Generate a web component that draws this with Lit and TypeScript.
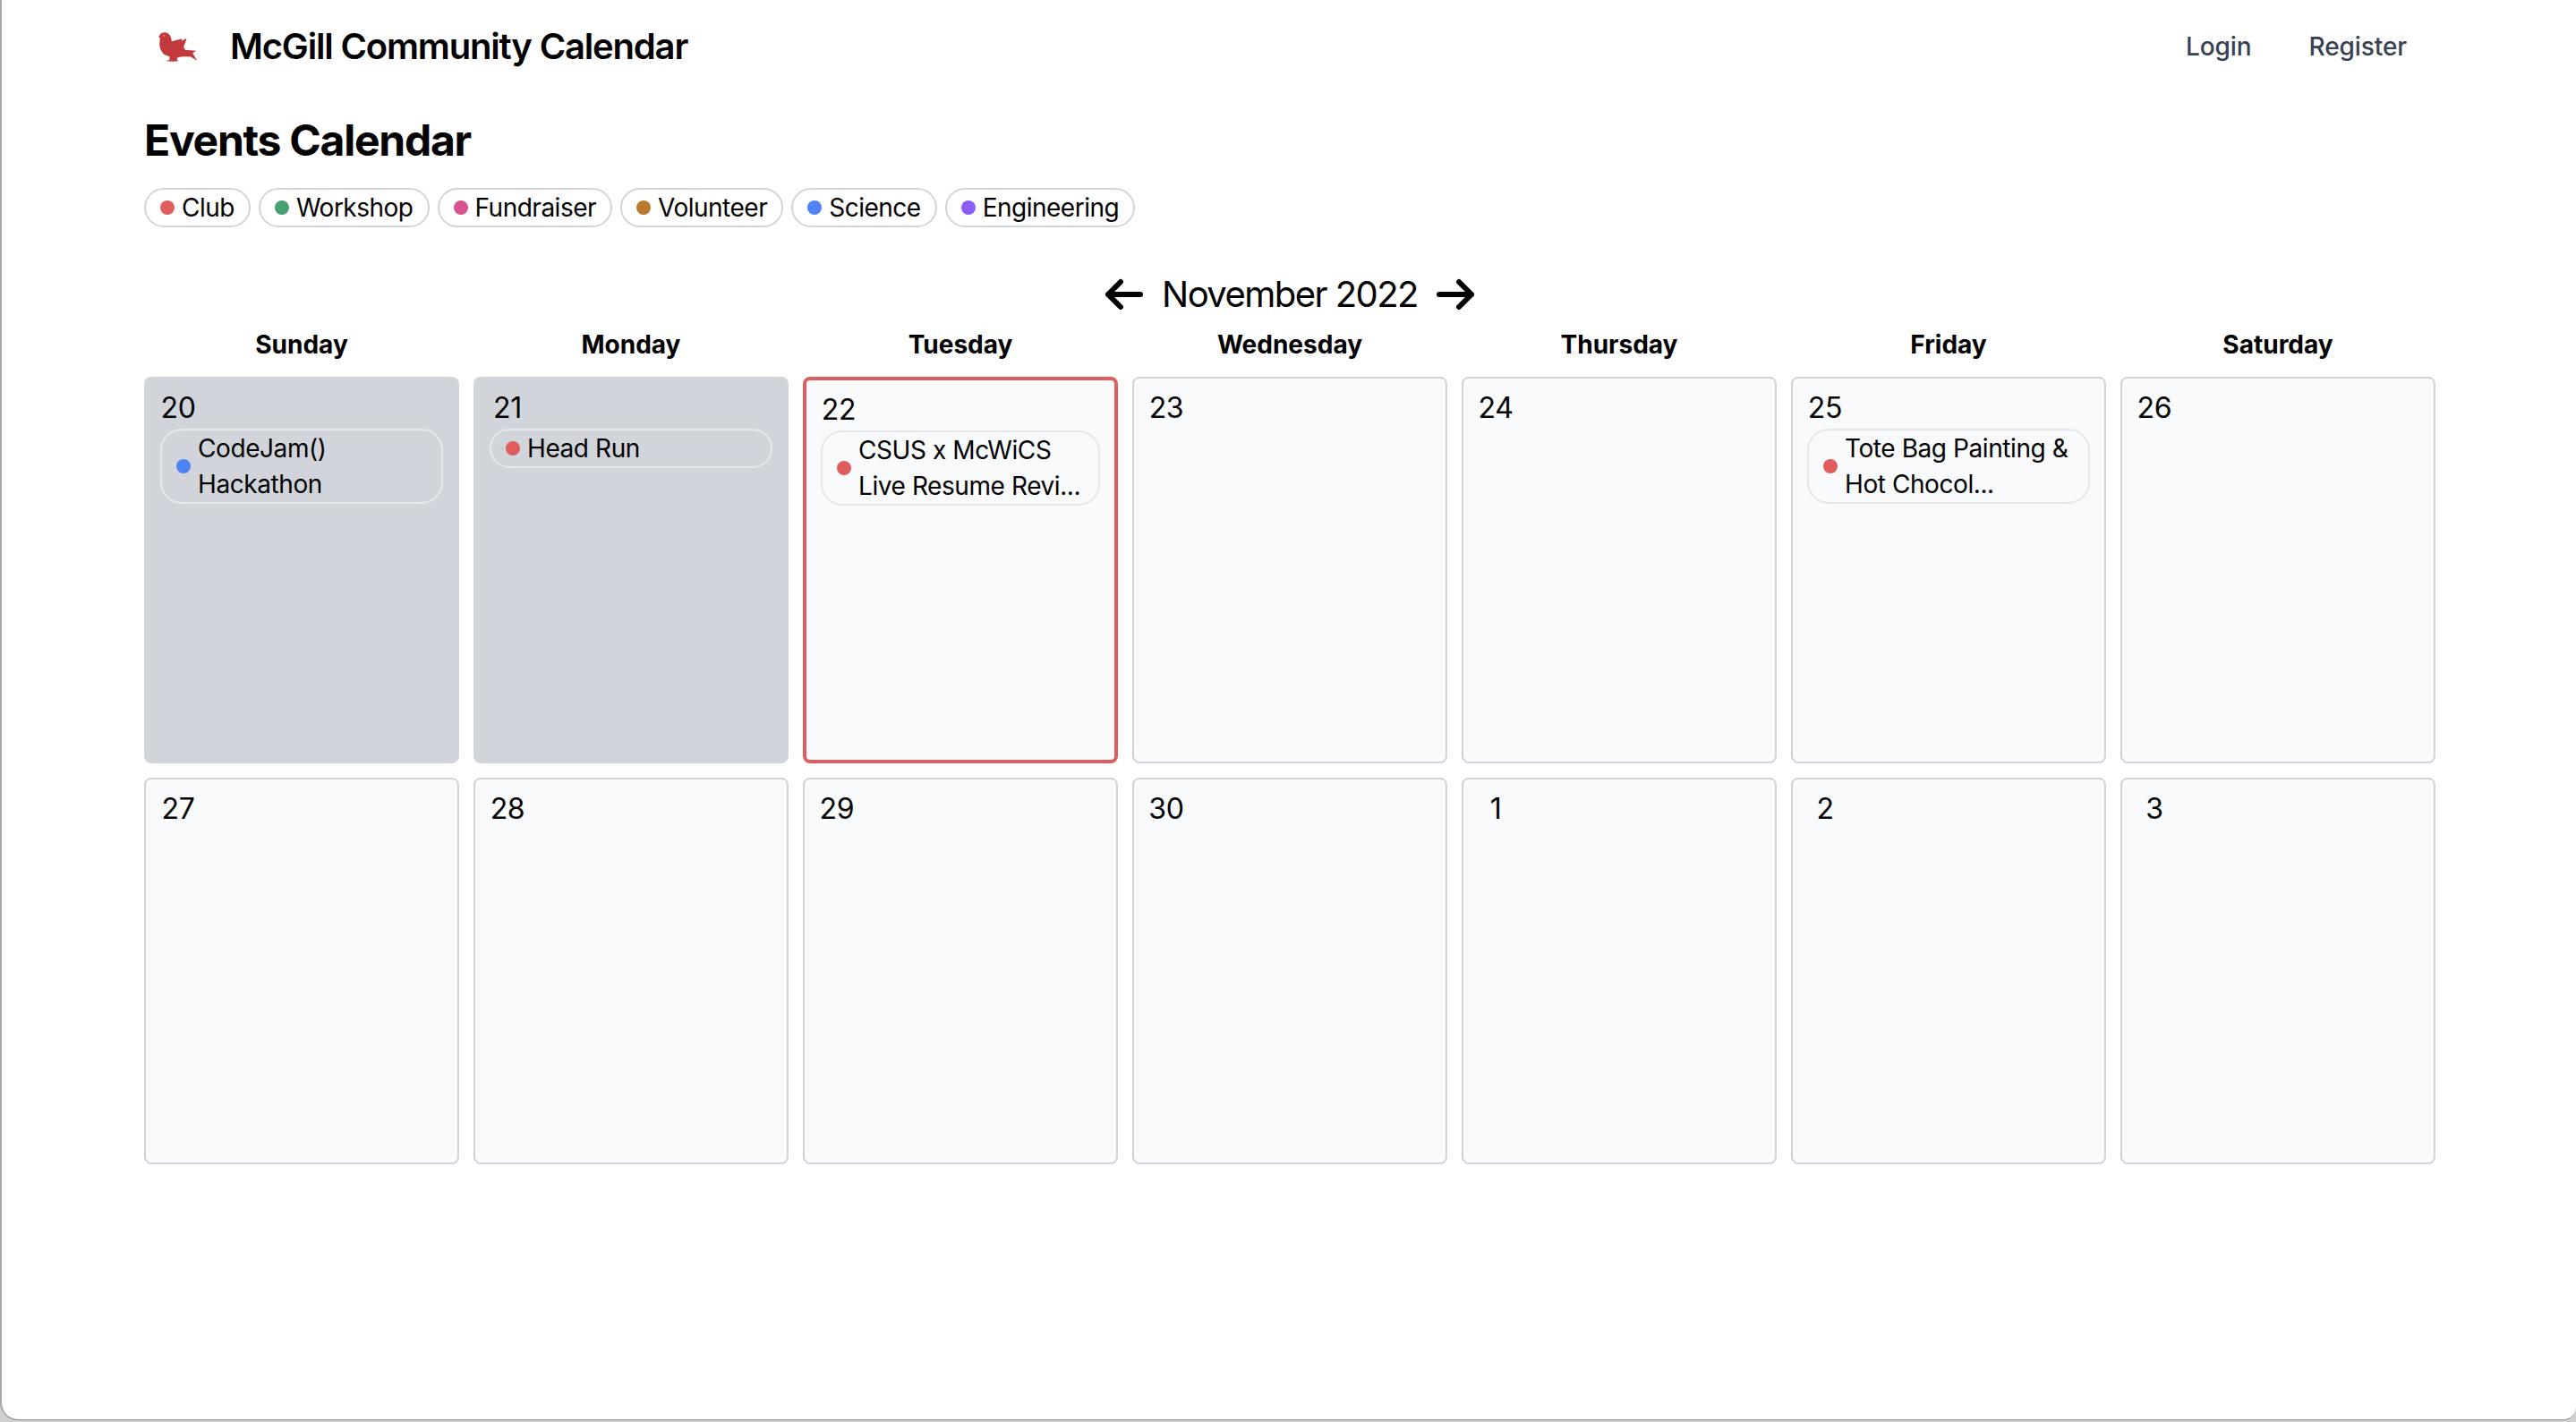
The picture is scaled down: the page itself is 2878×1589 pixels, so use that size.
import { LitElement, html, css, nothing } from "lit";
import { customElement } from "lit/decorators.js";

type Ev = { color: string; title: string };
type Day = { n: number; past?: boolean; today?: boolean; ev?: Ev };

const CATS = [
  ["Club", "club"],
  ["Workshop", "workshop"],
  ["Fundraiser", "fundraiser"],
  ["Volunteer", "volunteer"],
  ["Science", "science"],
  ["Engineering", "engineering"],
];
const WEEKDAYS = ["Sunday", "Monday", "Tuesday", "Wednesday", "Thursday", "Friday", "Saturday"];
const DAYS: Day[] = [
  { n: 20, past: true, ev: { color: "science", title: "CodeJam() Hackathon" } },
  { n: 21, past: true, ev: { color: "club", title: "Head Run" } },
  { n: 22, today: true, ev: { color: "club", title: "CSUS x McWiCS Live Resume Revi..." } },
  { n: 23 },
  { n: 24 },
  { n: 25, ev: { color: "club", title: "Tote Bag Painting & Hot Chocol..." } },
  { n: 26 },
  { n: 27 },
  { n: 28 },
  { n: 29 },
  { n: 30 },
  { n: 1 },
  { n: 2 },
  { n: 3 },
];

@customElement("app-root")
export class AppRoot extends LitElement {
  static styles = css`
    :host {
      display: block;
      height: 1589px;
      overflow: hidden;
      background: #d0d0d0;
      font-family: Inter, "Liberation Sans", sans-serif;
      color: #000;
    }
    .window {
      box-sizing: border-box;
      height: 1587px;
      background: #fff;
      border-left: 2px solid #a8a8a8;
      border-bottom: 1px solid #8e8e8e;
      border-radius: 0 0 14px 20px;
      overflow: hidden;
    }
    .nav {
      display: flex;
      align-items: center;
      height: 104px;
      margin-bottom: -2px;
      padding: 0 189px 0 173px;
    }
    .logo {
      width: 47px;
      height: 35px;
      flex: none;
    }
    .brand {
      margin-left: 35px;
      font-size: 40px;
      font-weight: 600;
      line-height: 56px;
      letter-spacing: -1.17px;
      white-space: nowrap;
    }
    .links {
      margin-left: auto;
      display: flex;
      gap: 64px;
      font-size: 28px;
      font-weight: 500;
      line-height: 40px;
      letter-spacing: -0.1px;
      color: #374151;
    }
    .main {
      width: 2560px;
      margin-left: 159px;
    }
    h1 {
      margin: 23px 0 21px;
      font-size: 48px;
      line-height: 64px;
      font-weight: 700;
      letter-spacing: -1.25px;
    }
    .chips {
      display: flex;
      gap: 9px;
    }
    .chip {
      display: flex;
      align-items: center;
      gap: 8px;
      padding: 0 16px;
      border: 2px solid #d1d5db;
      border-radius: 22px;
      font-size: 28px;
      line-height: 40px;
      letter-spacing: -0.5px;
    }
    .dot {
      flex: none;
      width: 16px;
      height: 16px;
      border-radius: 50%;
    }
    .club { background: #e05d5d; }
    .workshop { background: #47a072; }
    .fundraiser { background: #d9528f; }
    .volunteer { background: #b97a2b; }
    .science { background: #4f82f3; }
    .engineering { background: #8b5cf0; }
    .month {
      display: flex;
      justify-content: center;
      align-items: center;
      gap: 18px;
      height: 60px;
      margin-top: 45px;
      font-size: 40px;
      line-height: 60px;
      letter-spacing: -1.55px;
    }
    .month svg {
      width: 48px;
      height: 48px;
      flex: none;
      fill: none;
      stroke: #000;
      stroke-width: 3;
      stroke-linecap: round;
      stroke-linejoin: round;
    }
    .grid {
      display: grid;
      grid-template-columns: repeat(7, 352px);
      grid-auto-rows: 432px;
      gap: 16px;
    }
    .heads {
      grid-auto-rows: 40px;
      margin: 6px 0 16px;
    }
    .head {
      text-align: center;
      font-size: 28px;
      line-height: 40px;
      font-weight: 700;
    }
    .cell {
      box-sizing: border-box;
      padding: 8px 16px;
      border: 2px solid #d1d5db;
      border-radius: 8px;
      background: #f9fafb;
    }
    .cell.past { background: #d1d5db; }
    .cell.today { border: 4px solid #e05d5d; }
    .num {
      width: 40px;
      height: 48px;
      text-align: center;
      font-size: 32px;
      line-height: 50px;
      letter-spacing: -0.3px;
    }
    .event {
      display: flex;
      align-items: center;
      gap: 8px;
      padding: 0 8px 0 16px;
      border: 2px solid #e5e7eb;
      border-radius: 24px;
      font-size: 28px;
      line-height: 40px;
      letter-spacing: -0.42px;
    }
  `;

  render() {
    return html`
      <div class="window">
        <header class="nav">
          <svg class="logo" viewBox="105 70 140 105" aria-hidden="true">
            <path
              fill="#c2393d"
              d="M111 88 L118 78 Q128 71 140 75 Q150 80 153 92 L155 104 L178 98 L190 95 L188 102 L205 93 L200 110 L195 122 L200 132 L237 135 L225 143 L240 168 L218 155 L190 155 L175 158 L172 163 L177 170 L158 171 L136 170 L148 165 L148 155 L130 148 Q116 135 114 115 L116 93 Z"
            />
            <circle cx="129" cy="85" r="2" fill="#f2c9c9" />
          </svg>
          <div class="brand">McGill Community Calendar</div>
          <nav class="links"><span>Login</span><span>Register</span></nav>
        </header>
        <main class="main">
          <h1>Events Calendar</h1>
          <div class="chips">
            ${CATS.map(
              ([label, cls]) => html`<div class="chip"><span class="dot ${cls}"></span>${label}</div>`
            )}
          </div>
          <div class="month">
            <svg viewBox="0 0 24 24"><path d="M10 19l-7-7m0 0l7-7m-7 7h18" /></svg>
            <span>November 2022</span>
            <svg viewBox="0 0 24 24"><path d="M14 5l7 7m0 0l-7 7m7-7H3" /></svg>
          </div>
          <div class="grid heads">
            ${WEEKDAYS.map((d) => html`<div class="head">${d}</div>`)}
          </div>
          <div class="grid">
            ${DAYS.map(
              (d) => html`
                <div class="cell ${d.past ? "past" : ""} ${d.today ? "today" : ""}">
                  <div class="num">${d.n}</div>
                  ${d.ev
                    ? html`<div class="event"><span class="dot ${d.ev.color}"></span><span>${d.ev.title}</span></div>`
                    : nothing}
                </div>
              `
            )}
          </div>
        </main>
      </div>
    `;
  }
}
